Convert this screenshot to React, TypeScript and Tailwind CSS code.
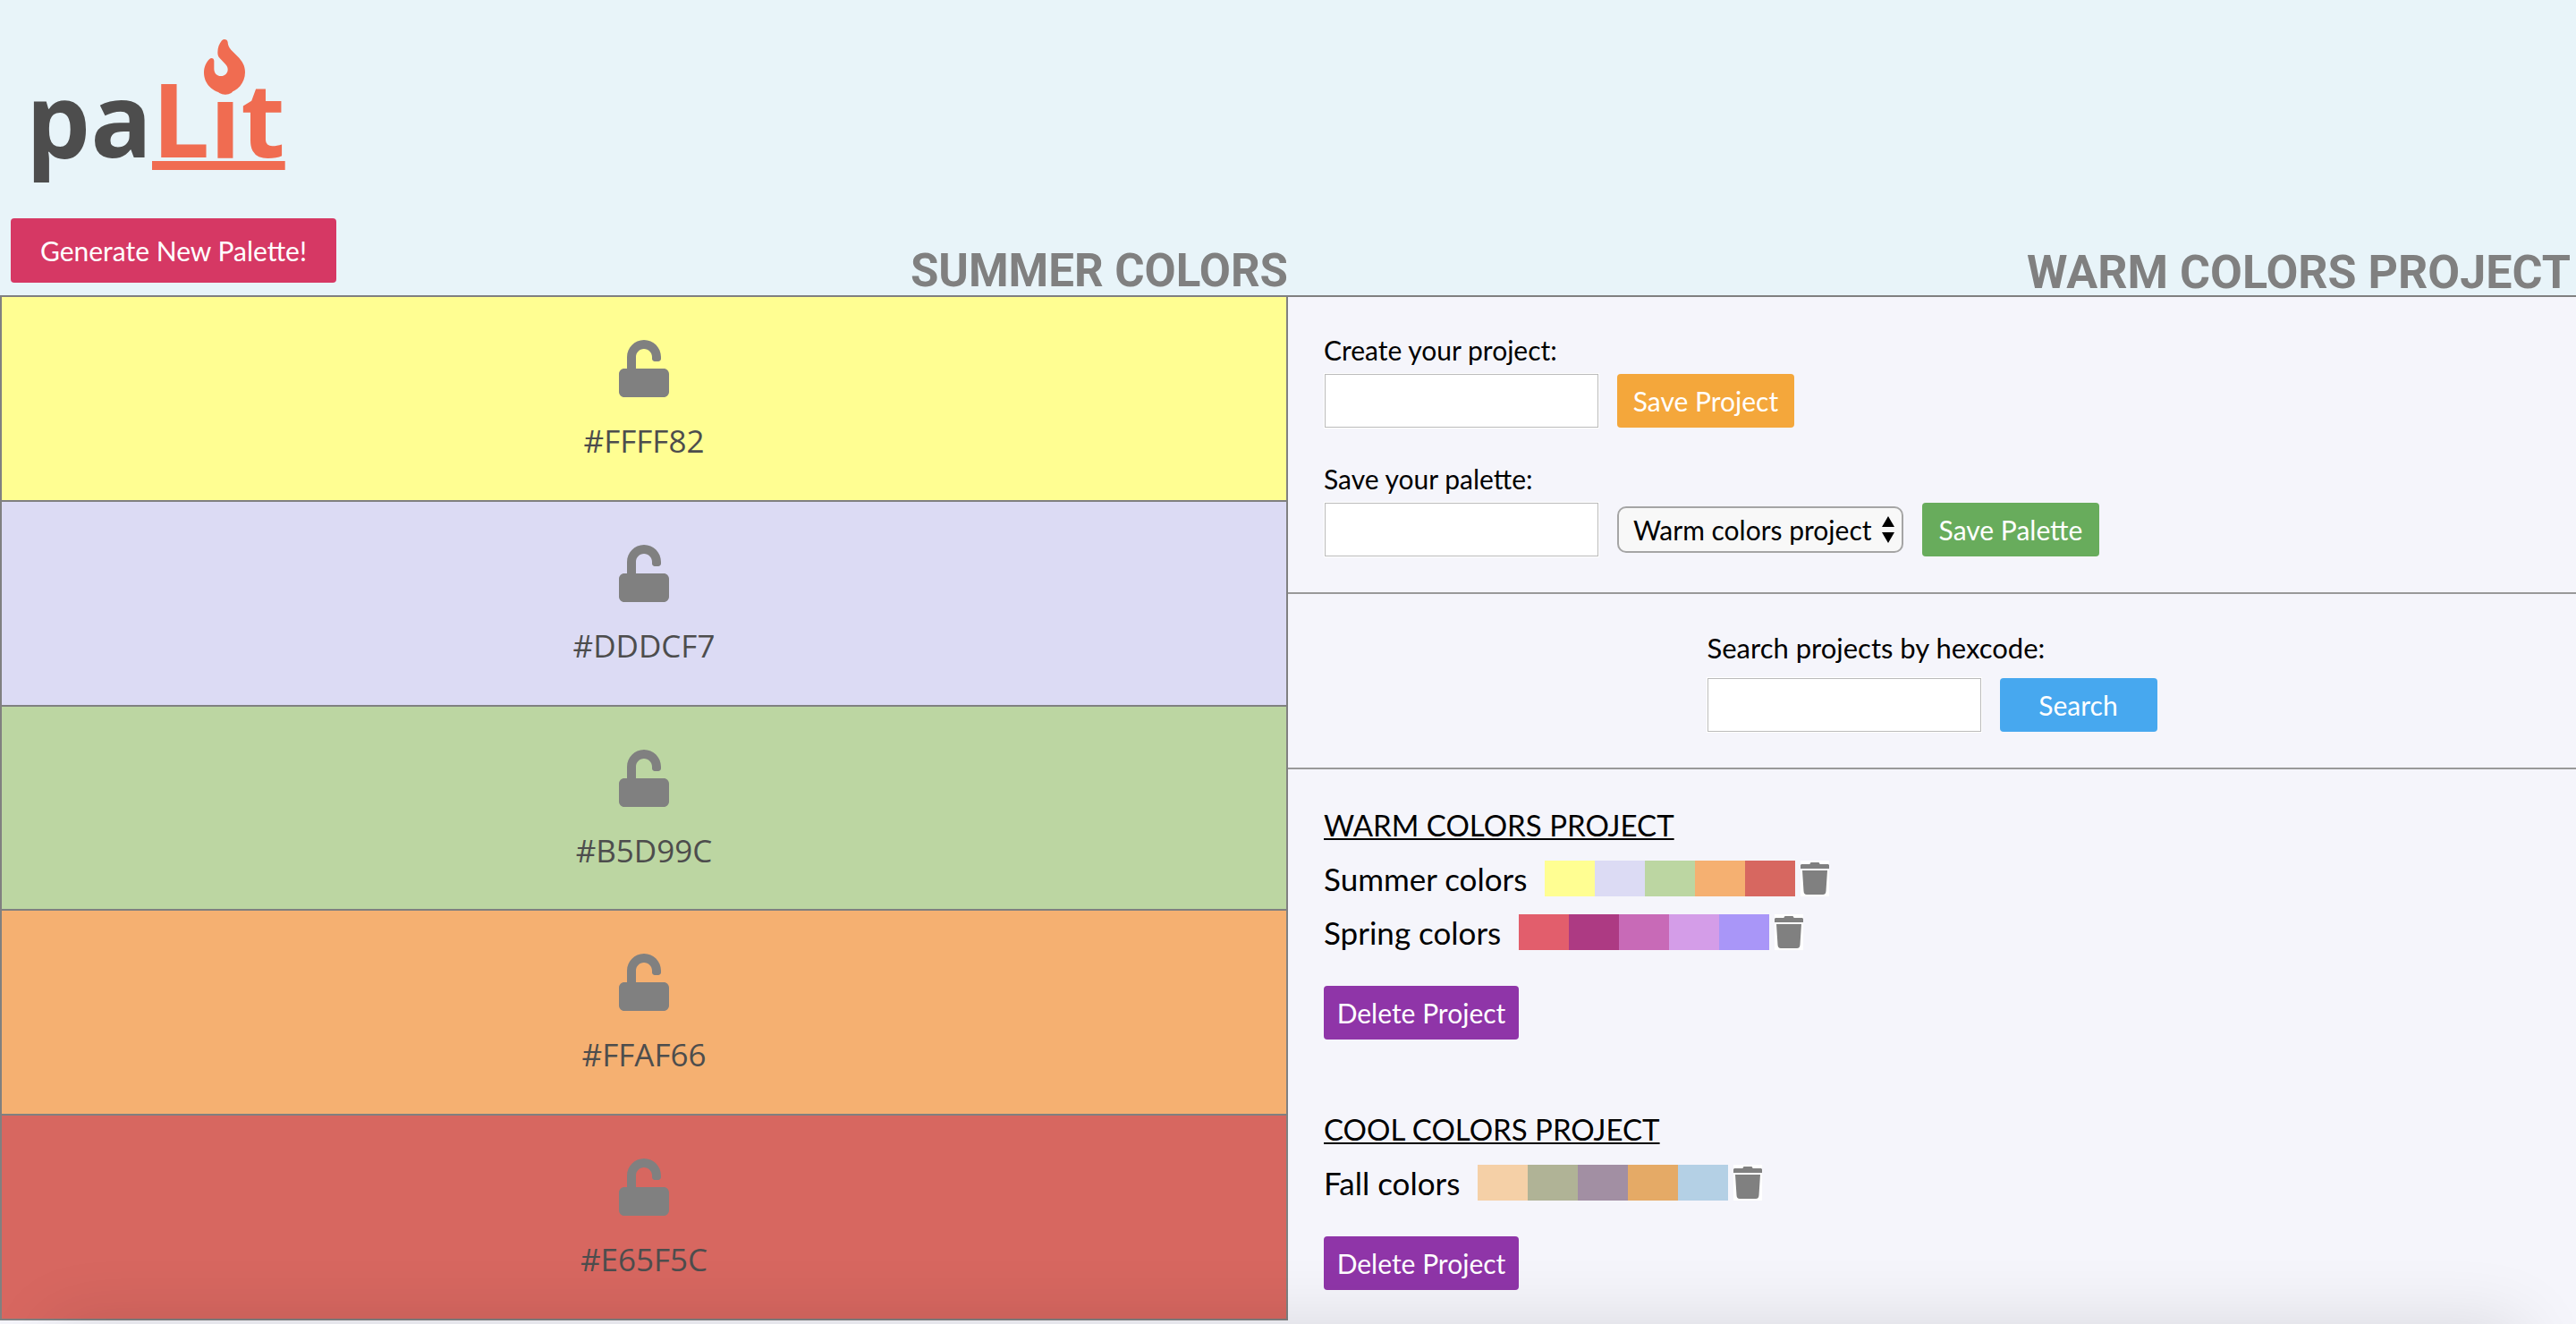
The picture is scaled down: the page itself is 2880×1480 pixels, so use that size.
import React from "react";
import { FaUnlock } from "react-icons/fa";

const rows = [
  { hex: "#FFFF82", bg: "bg-[#fffe92]" },
  { hex: "#DDDCF7", bg: "bg-[#dcdbf4]" },
  { hex: "#B5D99C", bg: "bg-[#bcd6a2]" },
  { hex: "#FFAF66", bg: "bg-[#f5b071]" },
  { hex: "#E65F5C", bg: "bg-[#d76760]" },
];

const projects = [
  {
    name: "WARM COLORS PROJECT",
    palettes: [
      {
        name: "Summer colors",
        colors: ["bg-[#fffe92]", "bg-[#dcdbf4]", "bg-[#bcd6a2]", "bg-[#f5b071]", "bg-[#d76760]"],
      },
      {
        name: "Spring colors",
        colors: ["bg-[#e25e6c]", "bg-[#ad3a83]", "bg-[#c86ab7]", "bg-[#d49de8]", "bg-[#a996f8]"],
      },
    ],
  },
  {
    name: "COOL COLORS PROJECT",
    palettes: [
      {
        name: "Fall colors",
        colors: ["bg-[#f5d0a7]", "bg-[#b0b396]", "bg-[#a28fa3]", "bg-[#e5aa66]", "bg-[#b4d0e5]"],
      },
    ],
  },
];

const input = "h-[60px] w-[306px] border border-[#bbbbbb] bg-white px-3 text-[30px] outline outline-white";
const button = "h-[60px] cursor-pointer rounded text-[30px] leading-10 text-white";

function Flame() {
  return (
    <svg viewBox="0 0 138 180" aria-hidden="true" className="absolute top-[44px] left-[228px] h-[60px] w-[46px] fill-[#f06c51]">
      <path d="M69 0C75 0 79 3 80 10C81 20 83 26 91 35L112 56C129 73 138 88 138 110C138 150 107 180 69 180C31 180 0 150 0 112C0 92 8 77 18 67C24 60 34 63 34 72V98C34 114 44 123 57 123C70 123 80 113 80 101C80 94 77 88 70 81L53 63C48 57 46 52 46 44C46 28 51 15 60 4C63 1 66 0 69 0Z" />
    </svg>
  );
}

function Trash() {
  return (
    <svg viewBox="0 0 32 40" aria-hidden="true" className="h-10 w-8 bg-white">
      <path d="M10 4.5L11.5 2H20.5L22 4.5Z" fill="#808080" />
      <path d="M1 4H31L32 5V9H0V5Z" fill="#808080" />
      <path d="M2 11H30L28.5 34Q28.3 38 25 38H7Q3.7 38 3.5 34Z" fill="#808080" />
    </svg>
  );
}

function PaletteColumn() {
  return (
    <section aria-label="Current palette" className="grid h-[calc(100vh-336px)] min-h-[1000px] grid-rows-5 border-x-2 border-[#808080]">
      {rows.map((row) => (
        <div key={row.hex} className={`flex flex-col items-center border-b-2 border-[#808080] pt-12 ${row.bg}`}>
          <button type="button" aria-label={`Lock ${row.hex}`} className="cursor-pointer text-[#808080]">
            <FaUnlock className="h-16 w-14" />
          </button>
          <p className="mt-6 font-['Open_Sans',sans-serif] text-[35px] leading-[50px] text-[#4d4d4d]">{row.hex}</p>
        </div>
      ))}
    </section>
  );
}

function SaveForms() {
  return (
    <section className="flex flex-col gap-[38px] border-b-2 border-[#999999] p-10">
      <form>
        <label htmlFor="project" className="block text-[30px] leading-[38px]">Create your project:</label>
        <div className="mt-2 flex items-center gap-[21px] pl-px">
          <input id="project" type="text" className={input} />
          <button type="button" className={`${button} w-[198px] bg-[#f4a73b]`}>Save Project</button>
        </div>
      </form>
      <form>
        <label htmlFor="palette" className="block text-[30px] leading-[38px]">Save your palette:</label>
        <div className="mt-2 flex items-center gap-[21px] pl-px">
          <input id="palette" type="text" className={input} />
          <div className="relative">
            <select
              aria-label="Project for the palette"
              className="h-[52px] w-[320px] appearance-none rounded-[10px] border-2 border-[#a5a5a5] bg-[#f8f8f8] pl-4 text-[30px] leading-10"
            >
              <option>Warm colors project</option>
              <option>Cool colors project</option>
            </select>
            <svg viewBox="0 0 14 30" aria-hidden="true" className="pointer-events-none absolute top-[11px] right-[10px] h-[30px] w-3.5">
              <path d="M7 0L14 12H0ZM7 30L0 18H14Z" />
            </svg>
          </div>
          <button type="button" className={`${button} w-[198px] bg-[#68ac5c]`}>Save Palette</button>
        </div>
      </form>
    </section>
  );
}

function SearchForm() {
  return (
    <section className="flex justify-center border-b-2 border-[#999999] p-10">
      <form>
        <label htmlFor="search" className="block text-[31px] leading-10">Search projects by hexcode:</label>
        <div className="mt-3.5 flex items-center gap-[21px]">
          <input id="search" type="text" className={input} />
          <button type="button" className={`${button} w-[176px] bg-[#47a8ef]`}>Search</button>
        </div>
      </form>
    </section>
  );
}

function Projects() {
  return (
    <section className="flex flex-col gap-20 px-10 pt-[42px]">
      {projects.map((project) => (
        <article key={project.name}>
          <h3 className="text-[33px] leading-10 underline decoration-2 underline-offset-2 [text-decoration-skip-ink:none]">{project.name}</h3>
          <ul className="mt-5 flex flex-col gap-5">
            {project.palettes.map((palette) => (
              <li key={palette.name} className="flex h-10 items-center">
                <span className="text-[35px] leading-10">{palette.name}</span>
                <div className="ml-5 flex">
                  {palette.colors.map((color) => (
                    <span key={color} className={`h-10 w-14 ${color}`} />
                  ))}
                </div>
                <button type="button" aria-label={`Delete ${palette.name}`} className="ml-1.5 cursor-pointer">
                  <Trash />
                </button>
              </li>
            ))}
          </ul>
          <button type="button" className={`${button} mt-10 w-[218px] bg-[#8f35a8]`}>Delete Project</button>
        </article>
      ))}
    </section>
  );
}

export default function App() {
  return (
    <div className="min-h-screen bg-[#f5f5fb] font-['Lato',sans-serif] text-black">
      <header className="grid h-[332px] grid-cols-2 border-b-2 border-[#808080] bg-[#e8f4f9]">
        <div className="relative flex flex-col justify-between">
          <h1 className="pt-[54px] pl-[29px] font-['Open_Sans',sans-serif] text-[114px] leading-[156px] font-bold text-[#4d4d4d]">
            pa<span className="text-[#f06c51] underline decoration-[10px] underline-offset-4 [text-decoration-skip-ink:none]">Lit</span>
          </h1>
          <Flame />
          <div className="flex items-end justify-between pl-3">
            <button type="button" className="mb-3.5 h-[72px] w-[364px] cursor-pointer rounded bg-[#d63864] text-[30px] text-white">
              Generate New Palette!
            </button>
            <h2 className="font-['Roboto',sans-serif] text-[51px] leading-[54px] font-bold text-[#808080]">SUMMER COLORS</h2>
          </div>
        </div>
        <div className="flex items-end justify-end pr-1.5">
          <h2 className="font-['Roboto',sans-serif] text-[52px] leading-[50px] font-bold text-[#808080]">WARM COLORS PROJECT</h2>
        </div>
      </header>
      <main className="grid grid-cols-2 items-start">
        <PaletteColumn />
        <div>
          <SaveForms />
          <SearchForm />
          <Projects />
        </div>
      </main>
      <div className="pointer-events-none fixed inset-x-[60px] top-full h-[200px] shadow-[0_0_80px_rgba(0,0,0,0.12)]" />
    </div>
  );
}
